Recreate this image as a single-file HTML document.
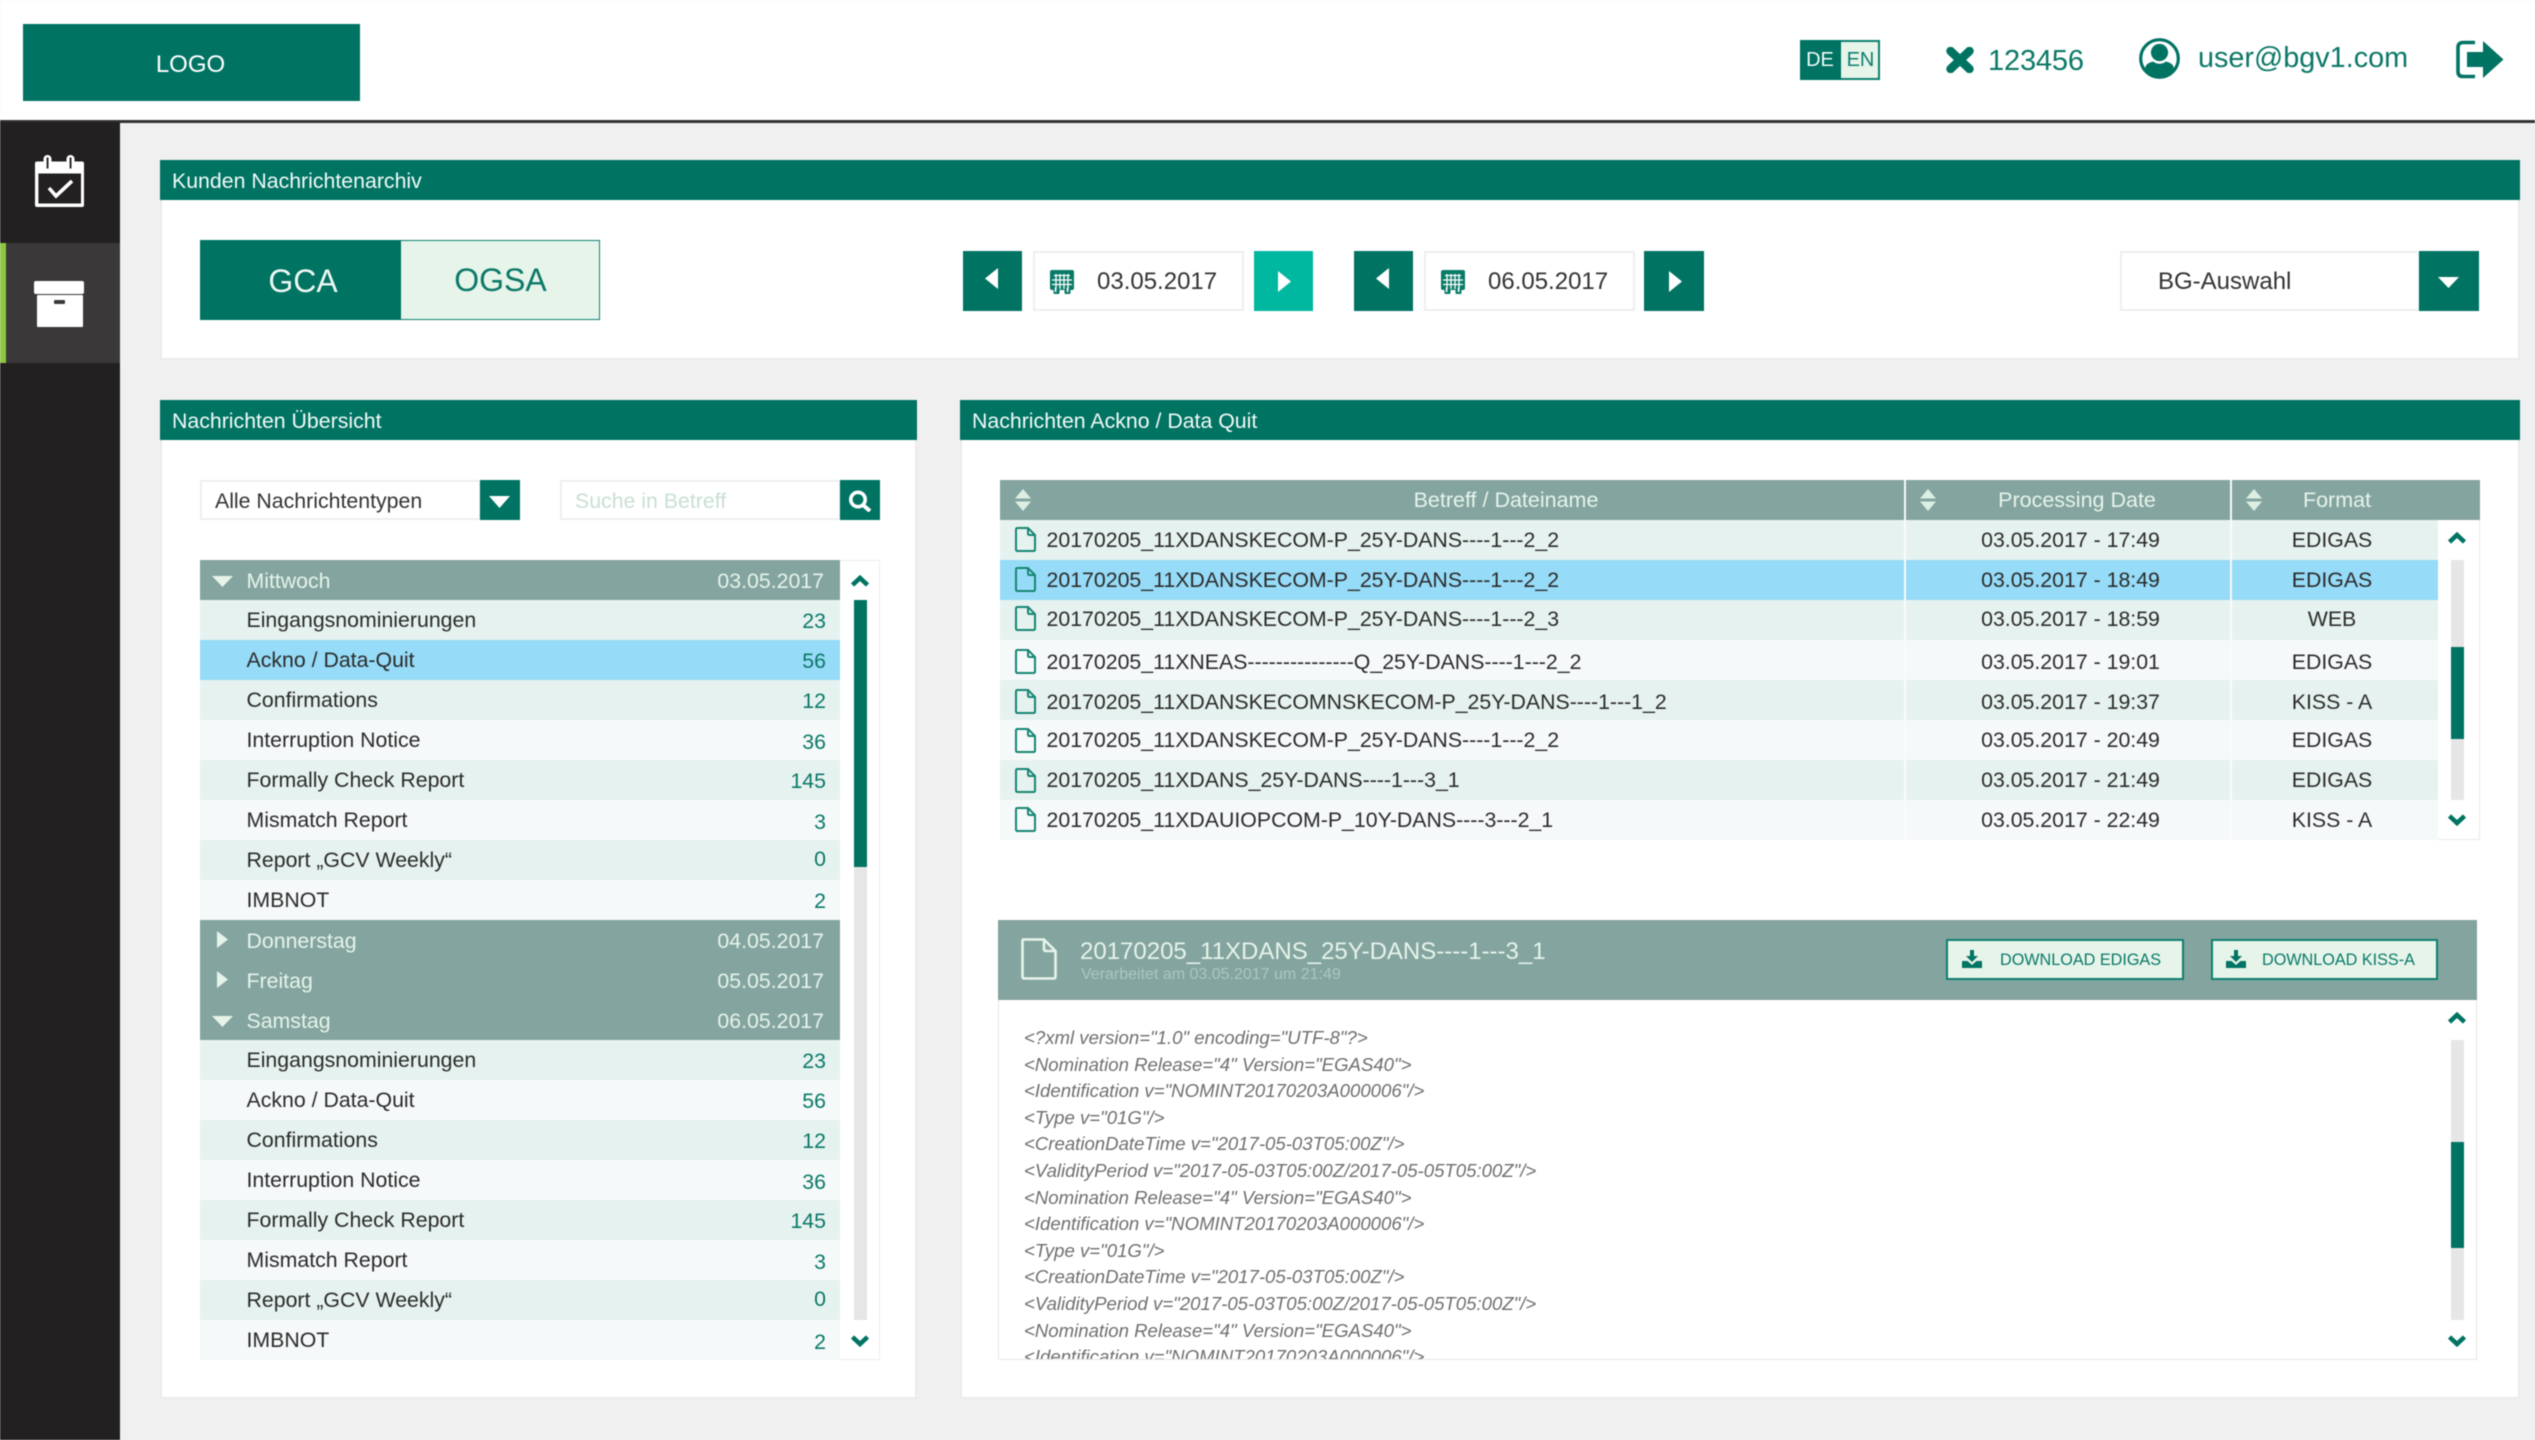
<!DOCTYPE html>
<html lang="de">
<head>
<meta charset="utf-8">
<title>Kunden Nachrichtenarchiv</title>
<style>
*{box-sizing:border-box}
html,body{margin:0;padding:0}
body{position:relative;width:2535px;height:1440px;overflow:hidden;background:#f0f0f0;font-family:"Liberation Sans",Arial,sans-serif;color:#2b2b2b;font-size:21.3px;filter:blur(.5px)}
.a,.t,svg.a{position:absolute}
.t{white-space:nowrap;height:40px;line-height:42px}
.teal{background:#007363}
.header{left:0;top:0;width:2535px;height:123px;background:#fff;border-bottom:3px solid #333}
.side{left:0;top:122px;width:120px;height:1318px;background:#222021}
.sideact{left:0;top:243px;width:120px;height:120px;background:#3a3839;border-left:6px solid #8dc63f}
.panel{background:#fff;border:2px solid #ebebeb}
.ptitle{background:#007363;color:#f2faf6;height:40px;line-height:42px;padding-left:12px;font-size:21.3px}
.box{background:#fff;border:2px solid #eeeeee}
.list{left:200px;top:560px;width:640px}
.row{position:relative;height:40px}
.h{background:#84a4a0;color:#e6f4ea}
.g{background:#e6f2ef}
.l{background:#f5f9fa}
.s{background:#96dbf7}
.row span{position:absolute;white-space:nowrap;line-height:42px;height:40px;top:-1px}
.row .nm{left:46.5px}
.row .n{right:14px;color:#0b7867;top:0}
.h span{top:0 !important}
.row .dm{right:16px}
.trow{position:absolute;left:1000px;width:1438px;height:40px}
.trow span{position:absolute;white-space:nowrap;line-height:41px;height:40px}
.fn{left:46.5px}
.dt{left:981px;width:179px;text-align:center}
.fm{left:1232px;width:200px;text-align:center}
.off1{top:-1px}
.off2{top:2px}
.trow svg{position:absolute;left:15px;width:21px;height:25px}
.th{position:absolute;top:480px;height:40px;line-height:41px;color:#e6f4ea;white-space:nowrap;font-size:21.5px;text-align:center}
.xml{position:absolute;left:1024px;white-space:nowrap;font-style:italic;font-size:18.6px;height:26px;line-height:26px;color:#6f6f6f}
.btn{position:absolute;top:939px;height:41px;background:#e6f4ea;border:2px solid #0f7f70;color:#0a7a69;font-size:16.2px;line-height:38px;white-space:nowrap}
.btn span{position:absolute;top:0}
</style>
</head>
<body>
<svg width="0" height="0" style="position:absolute">
  <symbol id="file" viewBox="0 0 21 25"><path d="M2.5 1H13L20 8V22.5Q20 24 18.5 24H2.5Q1 24 1 22.5V2.5Q1 1 2.5 1Z" fill="none" stroke="#178673" stroke-width="2"/><path d="M13 1V6.5Q13 8 14.5 8H20" fill="none" stroke="#178673" stroke-width="2"/></symbol>
  <symbol id="up" viewBox="0 0 20 12"><path d="M2.5 10L10 3L17.5 10" fill="none" stroke="#007363" stroke-width="4.6"/></symbol>
  <symbol id="down" viewBox="0 0 20 12"><path d="M2.5 2L10 9L17.5 2" fill="none" stroke="#007363" stroke-width="4.6"/></symbol>
  <symbol id="sort" viewBox="0 0 16 22"><path d="M8 0L16 9.5H0Z M0 12.5H16L8 22Z" fill="#dcefe3"/></symbol>
  <symbol id="tri-d" viewBox="0 0 21 11"><path d="M0 0H21L10.5 11Z" fill="#e6f4ea"/></symbol>
  <symbol id="tri-r" viewBox="0 0 11 17"><path d="M0 0L11 8.5L0 17Z" fill="#e6f4ea"/></symbol>
  <symbol id="cal" viewBox="0 0 24 24"><path d="M2 0H22Q24 0 24 2V18Q24 20 22 20H2Q0 20 0 18V2Q0 0 2 0Z" fill="#087a68"/><path d="M4 5.5H20M2 10H22M2 14.5H22" stroke="#fff" stroke-width="1.3"/><path d="M6 4V19M10 4V19M14 4V19M18 4V19" stroke="#fff" stroke-width="1.3"/><path d="M3.5 19H9.5V23Q9.5 24 8.5 24H4.5Q3.5 24 3.5 23ZM14.5 19H20.5V23Q20.5 24 19.5 24H15.5Q14.5 24 14.5 23Z" fill="#087a68"/><path d="M5.6 17.5V22M17.6 17.5V22" stroke="#fff" stroke-width="1.6"/></symbol>
  <symbol id="dl" viewBox="0 0 20 18"><path d="M8 0H12V6H16L10 12L4 6H8Z M0 11H5.5L10 15L14.5 11H20V18H0Z" fill="#007363"/></symbol>
</svg>

<!-- Header -->
<div class="a header"></div>
<div class="a teal" style="left:23px;top:24px;width:337px;height:77px;color:#fff;text-align:center;line-height:81px;font-size:24px;text-indent:-2px">LOGO</div>

<div class="a teal" style="left:1800px;top:40px;width:41px;height:40px;color:#f1faf5;text-align:center;line-height:40px;font-size:20px;text-indent:-1px">DE</div>
<div class="a" style="left:1841px;top:40px;width:39px;height:40px;background:#e6f4ea;border:2px solid #0f7f70;border-left:0;color:#0f7f70;text-align:center;line-height:36px;font-size:20px;text-indent:2px">EN</div>

<svg class="a" style="left:1946px;top:47px" width="28" height="26" viewBox="0 0 28 26"><path d="M4.5 4L23.5 22M23.5 4L4.5 22" stroke="#007363" stroke-width="8.5" stroke-linecap="round"/></svg>
<div class="t" style="left:1988px;top:40px;font-size:29px;color:#0b7867;letter-spacing:-.15px">123456</div>

<svg class="a" style="left:2139px;top:38px" width="41" height="41" viewBox="0 0 41 41"><circle cx="20.5" cy="20.5" r="18.8" fill="none" stroke="#007363" stroke-width="3.2"/><circle cx="20.5" cy="14.5" r="8.6" fill="#007363"/><path d="M6 30Q7 25 14 23.5Q20.5 28 27 23.5Q34 25 35 30Q30 39 20.5 39Q11 39 6 30Z" fill="#007363"/></svg>
<div class="t" style="left:2198px;top:37px;font-size:28.8px;color:#0b7867">user@bgv1.com</div>

<svg class="a" style="left:2456px;top:40px" width="48" height="39" viewBox="0 0 48 39"><path d="M19 2.5H7Q2 2.5 2 7.5V31.5Q2 36.5 7 36.5H19" fill="none" stroke="#007363" stroke-width="3.6"/><path d="M11 12H27V1L47.5 19.5L27 38V27H11Z" fill="#007363"/></svg>

<!-- Sidebar -->
<div class="a side"></div>
<div class="a sideact"></div>
<svg class="a" style="left:34px;top:154px" width="51" height="54" viewBox="0 0 51 54"><path d="M3 7.5H48Q50 7.5 50 9.5V51Q50 53 48 53H3Q1 53 1 51V9.5Q1 7.5 3 7.5Z" fill="#fff"/><rect x="4.4" y="19.5" width="42.6" height="30" fill="#222021"/><rect x="9.5" y="1" width="8" height="16" rx="4" fill="#fff"/><rect x="32.5" y="1" width="8" height="16" rx="4" fill="#fff"/><rect x="12.6" y="3.5" width="1.9" height="11" fill="#222021"/><rect x="35.6" y="3.5" width="1.9" height="11" fill="#222021"/><path d="M15 34L22 42L38 27" fill="none" stroke="#fff" stroke-width="3.6"/></svg>
<div class="a" style="left:34px;top:281px;width:50px;height:13px;background:#fff;border-radius:2px"></div>
<div class="a" style="left:36.5px;top:295px;width:46px;height:32px;background:#fff;border-radius:1px"></div>
<div class="a" style="left:54px;top:300px;width:11px;height:4px;background:#3a3839;border-radius:1px"></div>

<!-- Top panel -->
<div class="a panel" style="left:160px;top:190px;width:2360px;height:170px"></div>
<div class="a ptitle" style="left:160px;top:160px;width:2360px">Kunden Nachrichtenarchiv</div>
<div class="a teal" style="left:200px;top:240px;width:201px;height:80px;color:#eef8f3;text-align:center;line-height:82px;font-size:32px;text-indent:5px">GCA</div>
<div class="a" style="left:401px;top:240px;width:199px;height:80px;background:#e6f4ea;border:1.5px solid #0f7f70;border-left:0;color:#0b7867;text-align:center;line-height:79px;font-size:32px;text-indent:1px">OGSA</div>

<div class="a teal" style="left:963px;top:251px;width:59px;height:60px"></div>
<svg class="a" style="left:985px;top:268px" width="13" height="21" viewBox="0 0 13 21"><path d="M13 0V21L0 10.5Z" fill="#fff"/></svg>
<div class="a box" style="left:1033px;top:251px;width:211px;height:60px"></div>
<svg class="a" style="left:1050px;top:270px" width="24" height="24"><use href="#cal"/></svg>
<div class="t" style="left:1097px;top:261px;font-size:24px;color:#333">03.05.2017</div>
<div class="a" style="left:1254px;top:251px;width:59px;height:60px;background:#00b8a0"></div>
<svg class="a" style="left:1278px;top:271px" width="13" height="21" viewBox="0 0 13 21"><path d="M0 0V21L13 10.5Z" fill="#fff"/></svg>

<div class="a teal" style="left:1354px;top:251px;width:59px;height:60px"></div>
<svg class="a" style="left:1376px;top:268px" width="13" height="21" viewBox="0 0 13 21"><path d="M13 0V21L0 10.5Z" fill="#fff"/></svg>
<div class="a box" style="left:1424px;top:251px;width:211px;height:60px"></div>
<svg class="a" style="left:1441px;top:270px" width="24" height="24"><use href="#cal"/></svg>
<div class="t" style="left:1488px;top:261px;font-size:24px;color:#333">06.05.2017</div>
<div class="a teal" style="left:1644px;top:251px;width:60px;height:60px"></div>
<svg class="a" style="left:1669px;top:271px" width="13" height="21" viewBox="0 0 13 21"><path d="M0 0V21L13 10.5Z" fill="#fff"/></svg>

<div class="a box" style="left:2120px;top:251px;width:300px;height:60px"></div>
<div class="t" style="left:2158px;top:261px;font-size:24px;color:#333">BG-Auswahl</div>
<div class="a teal" style="left:2419px;top:251px;width:60px;height:60px"></div>
<svg class="a" style="left:2438px;top:277px" width="21" height="11" viewBox="0 0 21 11"><path d="M0 0H21L10.5 11Z" fill="#fff"/></svg>

<!-- Left panel -->
<div class="a panel" style="left:160px;top:430px;width:757px;height:969px"></div>
<div class="a ptitle" style="left:160px;top:400px;width:757px">Nachrichten Übersicht</div>

<div class="a box" style="left:200px;top:480px;width:281px;height:40px"></div>
<div class="t" style="left:215px;top:480px;color:#333">Alle Nachrichtentypen</div>
<div class="a teal" style="left:480px;top:480px;width:40px;height:40px"></div>
<svg class="a" style="left:489px;top:496px" width="21" height="12" viewBox="0 0 21 11" preserveAspectRatio="none"><path d="M0 0H21L10.5 11Z" fill="#fff"/></svg>

<div class="a box" style="left:560px;top:480px;width:281px;height:40px"></div>
<div class="t" style="left:575px;top:480px;color:#c9e0d3">Suche in Betreff</div>
<div class="a teal" style="left:840px;top:480px;width:40px;height:40px"></div>
<svg class="a" style="left:847px;top:490px" width="25" height="22" viewBox="0 0 25 22"><circle cx="11" cy="9.5" r="7.2" fill="none" stroke="#fff" stroke-width="3.6"/><path d="M16 15L23 21" stroke="#fff" stroke-width="4"/></svg>

<div class="a" style="left:840px;top:560px;width:40px;height:800px;background:#fff;border:1px solid #ededed;border-left:0"></div>
<svg class="a" style="left:850px;top:575px" width="20" height="12"><use href="#up"/></svg>
<div class="a" style="left:854px;top:600px;width:13px;height:720px;background:#e6e6e6"></div>
<div class="a teal" style="left:854px;top:600px;width:13px;height:267px"></div>
<svg class="a" style="left:850px;top:1335px" width="20" height="12"><use href="#down"/></svg>

<div class="a list">
  <div class="row h"><svg class="a" style="left:12px;top:16px" width="21" height="11"><use href="#tri-d"/></svg><span class="nm">Mittwoch</span><span class="dm">03.05.2017</span></div>
  <div class="row g"><span class="nm">Eingangsnominierungen</span><span class="n">23</span></div>
  <div class="row s"><span class="nm">Ackno / Data-Quit</span><span class="n">56</span></div>
  <div class="row g"><span class="nm">Confirmations</span><span class="n">12</span></div>
  <div class="row l"><span class="nm">Interruption Notice</span><span class="n" style="top:1px">36</span></div>
  <div class="row g"><span class="nm">Formally Check Report</span><span class="n">145</span></div>
  <div class="row l"><span class="nm">Mismatch Report</span><span class="n" style="top:1px">3</span></div>
  <div class="row g"><span class="nm">Report „GCV Weekly“</span><span class="n" style="top:-2px">0</span></div>
  <div class="row l"><span class="nm">IMBNOT</span><span class="n">2</span></div>
  <div class="row h"><svg class="a" style="left:17px;top:11px" width="11" height="17"><use href="#tri-r"/></svg><span class="nm">Donnerstag</span><span class="dm">04.05.2017</span></div>
  <div class="row h"><svg class="a" style="left:17px;top:11px" width="11" height="17"><use href="#tri-r"/></svg><span class="nm">Freitag</span><span class="dm">05.05.2017</span></div>
  <div class="row h"><svg class="a" style="left:12px;top:16px" width="21" height="11"><use href="#tri-d"/></svg><span class="nm">Samstag</span><span class="dm">06.05.2017</span></div>
  <div class="row g"><span class="nm">Eingangsnominierungen</span><span class="n">23</span></div>
  <div class="row l"><span class="nm">Ackno / Data-Quit</span><span class="n">56</span></div>
  <div class="row g"><span class="nm">Confirmations</span><span class="n">12</span></div>
  <div class="row l"><span class="nm">Interruption Notice</span><span class="n" style="top:1px">36</span></div>
  <div class="row g"><span class="nm">Formally Check Report</span><span class="n">145</span></div>
  <div class="row l"><span class="nm">Mismatch Report</span><span class="n" style="top:1px">3</span></div>
  <div class="row g"><span class="nm">Report „GCV Weekly“</span><span class="n" style="top:-2px">0</span></div>
  <div class="row l"><span class="nm">IMBNOT</span><span class="n" style="top:1px">2</span></div>
</div>

<!-- Right panel -->
<div class="a panel" style="left:960px;top:430px;width:1560px;height:969px"></div>
<div class="a ptitle" style="left:960px;top:400px;width:1560px">Nachrichten Ackno / Data Quit</div>

<!-- Table -->
<div class="a" style="left:1000px;top:480px;width:1480px;height:360px;background:#fff;border:1px solid #e9e9e9;border-top:0"></div>
<div class="a" style="left:1000px;top:480px;width:1480px;height:40px;background:#84a4a0"></div>
<svg class="a" style="left:1015px;top:489px" width="16" height="22"><use href="#sort"/></svg>
<svg class="a" style="left:1920px;top:489px" width="16" height="22"><use href="#sort"/></svg>
<svg class="a" style="left:2246px;top:489px" width="16" height="22"><use href="#sort"/></svg>
<div class="th" style="left:1406px;width:200px">Betreff / Dateiname</div>
<div class="th" style="left:1977px;width:200px">Processing Date</div>
<div class="th" style="left:2237px;width:200px">Format</div>

<div class="trow g" style="top:520px"><svg style="top:7px"><use href="#file"/></svg><span class="fn">20170205_11XDANSKECOM-P_25Y-DANS----1---2_2</span><span class="dt">03.05.2017 - 17:49</span><span class="fm">EDIGAS</span></div>
<div class="trow s" style="top:560px"><svg style="top:7px"><use href="#file"/></svg><span class="fn">20170205_11XDANSKECOM-P_25Y-DANS----1---2_2</span><span class="dt">03.05.2017 - 18:49</span><span class="fm">EDIGAS</span></div>
<div class="trow g" style="top:600px"><svg style="top:6px"><use href="#file"/></svg><span class="fn off1">20170205_11XDANSKECOM-P_25Y-DANS----1---2_3</span><span class="dt off1">03.05.2017 - 18:59</span><span class="fm off1">WEB</span></div>
<div class="trow l" style="top:640px"><svg style="top:9px"><use href="#file"/></svg><span class="fn off2">20170205_11XNEAS---------------Q_25Y-DANS----1---2_2</span><span class="dt off2">03.05.2017 - 19:01</span><span class="fm off2">EDIGAS</span></div>
<div class="trow g" style="top:680px"><svg style="top:9px"><use href="#file"/></svg><span class="fn off2">20170205_11XDANSKECOMNSKECOM-P_25Y-DANS----1---1_2</span><span class="dt off2">03.05.2017 - 19:37</span><span class="fm off2">KISS - A</span></div>
<div class="trow l" style="top:720px"><svg style="top:8px"><use href="#file"/></svg><span class="fn">20170205_11XDANSKECOM-P_25Y-DANS----1---2_2</span><span class="dt">03.05.2017 - 20:49</span><span class="fm">EDIGAS</span></div>
<div class="trow g" style="top:760px"><svg style="top:8px"><use href="#file"/></svg><span class="fn">20170205_11XDANS_25Y-DANS----1---3_1</span><span class="dt">03.05.2017 - 21:49</span><span class="fm">EDIGAS</span></div>
<div class="trow l" style="top:800px"><svg style="top:7px"><use href="#file"/></svg><span class="fn">20170205_11XDAUIOPCOM-P_10Y-DANS----3---2_1</span><span class="dt">03.05.2017 - 22:49</span><span class="fm">KISS - A</span></div>

<div class="a" style="left:1904px;top:480px;width:2px;height:360px;background:#f9fbfb"></div>
<div class="a" style="left:2230px;top:480px;width:2px;height:360px;background:#f9fbfb"></div>

<svg class="a" style="left:2447px;top:532px" width="20" height="12"><use href="#up"/></svg>
<div class="a" style="left:2451px;top:560px;width:13px;height:240px;background:#e6e6e6"></div>
<div class="a teal" style="left:2451px;top:647px;width:13px;height:92px"></div>
<svg class="a" style="left:2447px;top:814px" width="20" height="12"><use href="#down"/></svg>

<!-- Detail -->
<div class="a" style="left:998px;top:920px;width:1479px;height:440px;background:#fff;border:1px solid #e6e6e6;overflow:hidden">
  <div class="xml" style="left:25px;top:104px">&lt;?xml version="1.0" encoding="UTF-8"?&gt;</div>
  <div class="xml" style="left:25px;top:131px">&lt;Nomination Release="4" Version="EGAS40"&gt;</div>
  <div class="xml" style="left:25px;top:157px">&lt;Identification v="NOMINT20170203A000006"/&gt;</div>
  <div class="xml" style="left:25px;top:184px">&lt;Type v="01G"/&gt;</div>
  <div class="xml" style="left:25px;top:210px">&lt;CreationDateTime v="2017-05-03T05:00Z"/&gt;</div>
  <div class="xml" style="left:25px;top:237px">&lt;ValidityPeriod v="2017-05-03T05:00Z/2017-05-05T05:00Z"/&gt;</div>
  <div class="xml" style="left:25px;top:264px">&lt;Nomination Release="4" Version="EGAS40"&gt;</div>
  <div class="xml" style="left:25px;top:290px">&lt;Identification v="NOMINT20170203A000006"/&gt;</div>
  <div class="xml" style="left:25px;top:317px">&lt;Type v="01G"/&gt;</div>
  <div class="xml" style="left:25px;top:343px">&lt;CreationDateTime v="2017-05-03T05:00Z"/&gt;</div>
  <div class="xml" style="left:25px;top:370px">&lt;ValidityPeriod v="2017-05-03T05:00Z/2017-05-05T05:00Z"/&gt;</div>
  <div class="xml" style="left:25px;top:397px">&lt;Nomination Release="4" Version="EGAS40"&gt;</div>
  <div class="xml" style="left:25px;top:423px">&lt;Identification v="NOMINT20170203A000006"/&gt;</div>
</div>
<div class="a" style="left:998px;top:920px;width:1479px;height:80px;background:#84a4a0"></div>
<svg class="a" style="left:1021px;top:938px" width="36" height="42" viewBox="0 0 36 42"><path d="M2.5 1.5H23L34.5 13V38.5Q34.5 40.5 32.5 40.5H3.5Q1.5 40.5 1.5 38.5V2.5Q1.5 1.5 2.5 1.5Z" fill="none" stroke="#e6f4ea" stroke-width="2.6"/><path d="M23 1.5V11Q23 13 25 13H34.5" fill="none" stroke="#e6f4ea" stroke-width="2.6"/></svg>
<div class="t" style="left:1080px;top:931px;font-size:24px;color:#e6f4ea">20170205_11XDANS_25Y-DANS----1---3_1</div>
<div class="t" style="left:1081px;top:954px;font-size:16px;color:#aac8c0">Verarbeitet am 03.05.2017 um 21:49</div>

<div class="btn" style="left:1946px;width:238px"><svg class="a" style="left:14px;top:9px" width="20" height="18"><use href="#dl"/></svg><span style="left:52px">DOWNLOAD EDIGAS</span></div>
<div class="btn" style="left:2211px;width:227px"><svg class="a" style="left:13px;top:9px" width="20" height="18"><use href="#dl"/></svg><span style="left:49px">DOWNLOAD KISS-A</span></div>

<svg class="a" style="left:2447px;top:1012px" width="20" height="12"><use href="#up"/></svg>
<div class="a" style="left:2451px;top:1040px;width:13px;height:280px;background:#e6e6e6"></div>
<div class="a teal" style="left:2451px;top:1142px;width:13px;height:106px"></div>
<svg class="a" style="left:2447px;top:1335px" width="20" height="12"><use href="#down"/></svg>
</body>
</html>
